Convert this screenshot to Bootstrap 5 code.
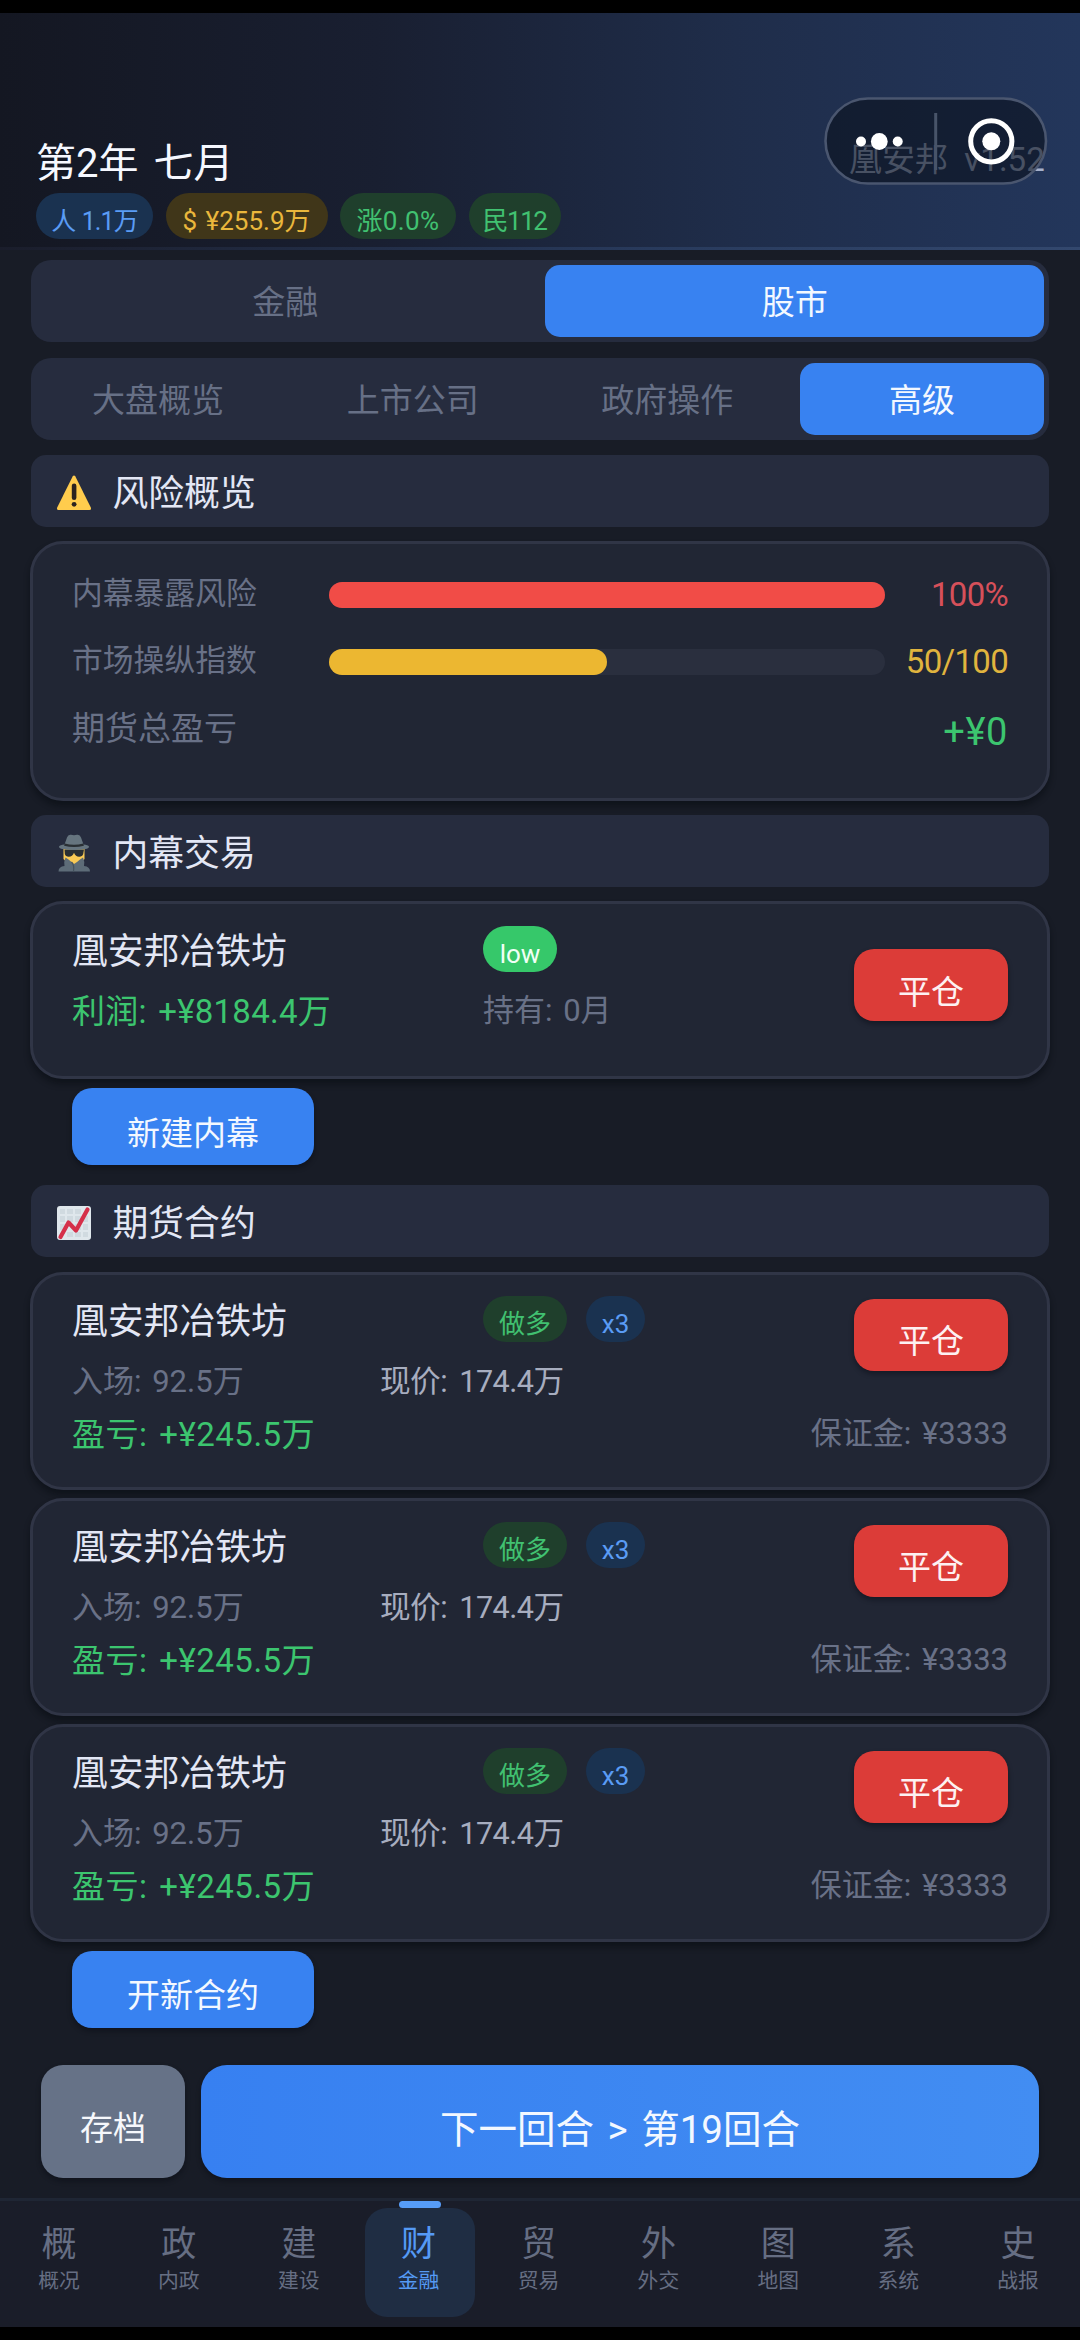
<!DOCTYPE html>
<html lang="zh-CN">
<head>
<meta charset="utf-8">
<meta name="viewport" content="width=device-width, initial-scale=1">
<title>凰安邦</title>
<link href="https://cdn.jsdelivr.net/npm/bootstrap@5.3.0/dist/css/bootstrap.min.css" rel="stylesheet">
<style>
  body { width: 1080px; height: 2340px; margin: 0; background: #000; color: #e3e7f5; overflow: hidden;
    font-family: Roboto, "Noto Sans CJK SC", sans-serif; line-height: 1; font-weight: 400; }
  .app { height: 2314px; margin-top: 13px; background: #181c26; }
  .topbar { height: 237px; padding: 130px 36px 0; position: relative; border-bottom: 3px solid #263550;
    border-image: linear-gradient(90deg, #1a1d2b, #283a5c 60%, #33486e) 1;
    background: linear-gradient(90deg, #141722, #191f31 35%, #1f2d4a 68%, #23365b); }
  .topbar .date { font-size: 40px; line-height: 41px; color: #f6f8ff; word-spacing: 5px; }
  .chips { margin-top: 9px; gap: 12.5px; }
  .chip { height: 46px; border-radius: 23px; font-size: 26px; padding-top: 10px; display: inline-flex; align-items: center; justify-content: center; flex: none; }
  .chip-blue { background: #1a3250; color: #5a9cf5; }
  .chip-gold { background: #403619; color: #eab73c; }
  .chip-green { background: #1f3f2c; color: #41c171; }
  .chip-low { background: #36c86a; color: #f0fff5; width: 74px; }
  .w-pop { width: 117px; font-size: 25px; letter-spacing: -.9px; word-spacing: 1px; }
  .w-cash { width: 162px; word-spacing: 2px; }
  .w-rise { width: 116px; letter-spacing: .4px; }
  .w-mood { width: 92px; letter-spacing: -1.5px; }
  .w-side { width: 84px; }
  .w-lev { width: 59px; margin-left: 19px; }
  .brand { font-size: 33px; color: #a5b1cc; top: 130px; left: 849px; white-space: pre; }
  .capsule { left: 824px; top: 84px; }
  .tabs { height: 82px; border-radius: 20px; background: #262c3e; padding: 5px; gap: 10.6px; margin: 10px 31px 0; }
  .tabs + .tabs { margin-top: 15.5px; }
  .tabs > div { flex: 1 1 0; display: flex; align-items: center; justify-content: center; border-radius: 15px; font-size: 33px; color: #677086; padding-top: 3px; }
  .tabs > .on { background: #3882f1; color: #f3f8ff; }
  .sect { height: 72px; margin: 14px 31px 0; border-radius: 15px; background: #262c3e; padding: 0 25px; font-size: 35.8px; gap: 20.5px; }
  .sect svg { margin-top: 4px; }
  .sect span { padding-top: 8px; }
  .panel { margin: 14px 30px 0; border: 3px solid #303546; border-radius: 33px; background: #212634; box-shadow: 0 5px 6px rgba(5,8,14,.45); padding: 0 39px; }
  .risk { height: 260px; padding-top: 17px; }
  .inside { height: 178px; padding-top: 22px; }
  .inside .b-red { margin-top: 23px; }
  .deal { height: 218px; padding-top: 21px; }
  .deal + .deal { margin-top: 8.2px; }
  .deal .b-red { margin-top: 3px; }
  .muted { color: #697187; }
  .soft { color: #a7adbf; }
  .gain { color: #3cc56f; }
  .meter { height: 26px; width: 556px; border-radius: 13px; background: #2a2f3e; }
  .meter > div { height: 26px; border-radius: 13px; }
  .mrow { height: 67px; }
  .mrow .val { font-size: 33px; letter-spacing: -.7px; }
  .mlabel { width: 257px; font-size: 30.8px; }
  .name { font-size: 35.8px; width: 411px; padding-top: 8px; }
  .b { display: flex; align-items: center; justify-content: center; border-radius: 20px; font-size: 33px; color: #fdf1f2; box-shadow: 0 3px 5px rgba(5,8,14,.4); }
  .b-red { width: 154px; height: 72px; background: #dc3c38; padding-top: 14px; }
  .b-blue { width: 242px; height: 77px; background: #3882f1; color: #f3f8ff; padding-top: 13px; margin: 9px 0 0 72px; }
  .t31 { font-size: 31px; line-height: 32px; word-spacing: 3px; }
  .t33 { font-size: 33px; line-height: 34px; word-spacing: 3px; letter-spacing: .25px; }
  .pl { letter-spacing: .5px; }
  .now { font-size: 30.6px; letter-spacing: -.5px; word-spacing: 5px; }
  .b-save { width: 144px; height: 113px; border-radius: 22px; background: #667287; color: #f6f8fc; padding-top: 13px; }
  .b-next { width: 838px; height: 113px; border-radius: 26px; background: linear-gradient(90deg, #3780f1, #428df2); color: #f3f8ff; font-size: 38.5px; padding-top: 18px; word-spacing: 4px; }
  .actions { margin: 0 41px 20px; gap: 16px; }
  .dock { height: 129px; background: #1a1d29; border-top: 3px solid #1f2634; padding-right: 1px; }
  .dock > div { flex: 1 1 0; display: flex; flex-direction: column; align-items: center; color: #666e83; padding-top: 26px; position: relative; left: -1px; }
  .dock .big { font-size: 35px; line-height: 36px; }
  .dock .sub { font-size: 20.8px; line-height: 22px; margin-top: 7px; }
  .dock .cur { color: #559af5; }
  .cur::before { content: ""; position: absolute; top: 7px; left: 6px; width: 110px; height: 109px; border-radius: 22px; background: #1f2d43; }
  .cur::after { content: ""; position: absolute; top: 0; left: 40px; width: 42px; height: 7px; border-radius: 3.5px; background: #569cf7; }
  .dock span { position: relative; z-index: 1; }
</style>
<script src="https://cdn.jsdelivr.net/npm/bootstrap@5.3.0/dist/js/bootstrap.bundle.min.js"></script>
</head>
<body>
<div class="app d-flex flex-column">
  <header class="topbar flex-shrink-0">
    <div class="date">第2年 七月</div>
    <div class="chips d-flex">
      <span class="chip chip-blue w-pop">人 1.1万</span>
      <span class="chip chip-gold w-cash">$ ¥255.9万</span>
      <span class="chip chip-green w-rise">涨0.0%</span>
      <span class="chip chip-green w-mood">民112</span>
    </div>
    <div class="brand position-absolute">凰安邦  v1.52</div>
    <svg class="capsule position-absolute" width="224" height="88" viewBox="0 0 224 88">
      <rect x="1.5" y="1.5" width="220.5" height="85" rx="42.5" fill="#0a101c" fill-opacity=".6" stroke="#4a566f" stroke-width="2.6"/>
      <path d="M111.700 16V73" stroke="#485469" stroke-width="3"/>
      <g fill="#fff"><circle cx="37" cy="44.500" r="5"/><circle cx="55.300" cy="44.500" r="8.400"/><circle cx="73.700" cy="44.500" r="5"/><circle cx="167.300" cy="44.300" r="9"/></g>
      <circle cx="167.300" cy="44.300" r="20.600" fill="none" stroke="#fff" stroke-width="5"/>
    </svg>
  </header>

  <nav class="tabs d-flex flex-shrink-0"><div>金融</div><div class="on">股市</div></nav>
  <nav class="tabs d-flex flex-shrink-0"><div>大盘概览</div><div>上市公司</div><div>政府操作</div><div class="on">高级</div></nav>

  <div class="sect d-flex align-items-center flex-shrink-0 mb-0" style="margin-top:15.5px">
    <svg width="36" height="36" viewBox="0 0 36 36"><path d="M16.6 1.600Q18 -.4 19.400 1.600L34.800 32.600Q35.600 35 33.400 35H2.600Q.4 35 1.200 32.600Z" fill="#ffcc4d"/><rect x="15.800" y="8.500" width="4.600" height="16.500" rx="2.300" fill="#2b2320"/><circle cx="18.100" cy="29.300" r="2.400" fill="#2b2320"/></svg>
    <span>风险概览</span>
  </div>
  <section class="panel risk flex-shrink-0">
    <div class="mrow d-flex align-items-center"><span class="mlabel muted">内幕暴露风险</span><div class="meter"><div style="width:100%;background:#f14c47"></div></div><span class="val ms-auto" style="color:#d6505a">100%</span></div>
    <div class="mrow d-flex align-items-center"><span class="mlabel muted">市场操纵指数</span><div class="meter"><div style="width:50%;background:#ecb731"></div></div><span class="val ms-auto" style="color:#e0b43e">50/100</span></div>
    <div class="mrow d-flex align-items-center justify-content-between"><span class="muted" style="font-size:33px">期货总盈亏</span><span class="gain" style="font-size:38px;letter-spacing:.6px;padding-top:6px">+¥0</span></div>
  </section>

  <div class="sect d-flex align-items-center flex-shrink-0">
    <svg width="36" height="38" viewBox="0 0 36 38">
      <path d="M7.500 14h21v11q-5 6-10.500 6t-10.500-6Z" fill="#f9ca55"/>
      <path d="M2.500 37.500q0-5 6-5.500-1-4 1-8.500 3 1.500 6 4.500l2.500 2 3-2q3-3 6-4.500 2 4.500 1 8.500 6 .5 6 5.500Z" fill="#5d6c78"/>
      <path d="M15.500 28q3 3 2 9.500" fill="none" stroke="#45525d" stroke-width="1.200"/>
      <path d="M8.500 15.500h19.500l-.8 4.500q-.8 2.800-4 2.800-3.700 0-5.200-4-1.500 4-5.200 4-3.200 0-4-2.800Z" fill="#292f33"/>
      <path d="M8.500 10.500 11 3.500Q12.200.2 15 .8q3 .8 6 0 2.800-.6 4 2.700l2.500 7q4.500.5 5.500 2 .3 1.500-2 2.200-13 2.800-26 0-2.300-.7-2-2.200 1-1.500 5.500-2Z" fill="#66757f"/>
      <path d="M8.700 9.500q9.300 2.500 18.600 0l.6 2.200q-9.900 2.600-19.800 0Z" fill="#292f33"/>
    </svg>
    <span>内幕交易</span>
  </div>
  <section class="panel inside d-flex justify-content-between flex-shrink-0">
    <div>
      <div class="d-flex align-items-center"><span class="name">凰安邦冶铁坊</span><span class="chip chip-low">low</span></div>
      <div class="d-flex" style="margin-top:23px"><span class="gain t33" style="width:411px">利润: +¥8184.4万</span><span class="muted t31">持有: 0月</span></div>
    </div>
    <div class="b b-red">平仓</div>
  </section>
  <div class="b b-blue flex-shrink-0">新建内幕</div>

  <div class="sect d-flex align-items-center flex-shrink-0" style="margin-top:20px">
    <svg width="36" height="36" viewBox="0 0 36 36"><rect x="1" y="1" width="34" height="34" rx="3" fill="#dfe7ec"/><path d="M4 4h5v5H4zM11 4h6v5h-6zM19 4h6v5h-6zM4 11h5v6H4zM11 11h6v6h-6zM19 11h6v6h-6zM27 11h5v6h-5zM4 19h5v6H4zM19 19h6v6h-6zM27 19h5v6h-5zM11 27h6v5h-6zM19 27h6v5h-6zM27 27h5v5h-5z" fill="#d0dae0"/><path d="M4.500 32 12.500 17.500 20 25.500 31.500 4.500" fill="none" stroke="#d5304a" stroke-width="4.200" stroke-linecap="round" stroke-linejoin="round"/></svg>
    <span>期货合约</span>
  </div>

  <section class="panel deal d-flex justify-content-between flex-shrink-0" style="margin-top:14.5px">
    <div>
      <div class="d-flex align-items-center"><span class="name">凰安邦冶铁坊</span><span class="chip chip-green w-side">做多</span><span class="chip chip-blue w-lev">x3</span></div>
      <div class="d-flex t31" style="margin-top:24px"><span class="muted" style="width:308px">入场: 92.5万</span><span class="soft now">现价: 174.4万</span></div>
      <div class="gain t33 pl" style="margin-top:20px">盈亏: +¥245.5万</div>
    </div>
    <div class="d-flex flex-column align-items-end"><div class="b b-red">平仓</div><div class="muted t31" style="margin-top:47px">保证金: ¥3333</div></div>
  </section>
  <section class="panel deal d-flex justify-content-between flex-shrink-0">
    <div>
      <div class="d-flex align-items-center"><span class="name">凰安邦冶铁坊</span><span class="chip chip-green w-side">做多</span><span class="chip chip-blue w-lev">x3</span></div>
      <div class="d-flex t31" style="margin-top:24px"><span class="muted" style="width:308px">入场: 92.5万</span><span class="soft now">现价: 174.4万</span></div>
      <div class="gain t33 pl" style="margin-top:20px">盈亏: +¥245.5万</div>
    </div>
    <div class="d-flex flex-column align-items-end"><div class="b b-red">平仓</div><div class="muted t31" style="margin-top:47px">保证金: ¥3333</div></div>
  </section>
  <section class="panel deal d-flex justify-content-between flex-shrink-0">
    <div>
      <div class="d-flex align-items-center"><span class="name">凰安邦冶铁坊</span><span class="chip chip-green w-side">做多</span><span class="chip chip-blue w-lev">x3</span></div>
      <div class="d-flex t31" style="margin-top:24px"><span class="muted" style="width:308px">入场: 92.5万</span><span class="soft now">现价: 174.4万</span></div>
      <div class="gain t33 pl" style="margin-top:20px">盈亏: +¥245.5万</div>
    </div>
    <div class="d-flex flex-column align-items-end"><div class="b b-red">平仓</div><div class="muted t31" style="margin-top:47px">保证金: ¥3333</div></div>
  </section>
  <div class="b b-blue flex-shrink-0">开新合约</div>

  <div class="actions d-flex mt-auto flex-shrink-0">
    <div class="b b-save">存档</div>
    <div class="b b-next">下一回合 &gt; 第19回合</div>
  </div>
  <nav class="dock d-flex flex-shrink-0">
    <div><span class="big">概</span><span class="sub">概况</span></div>
    <div><span class="big">政</span><span class="sub">内政</span></div>
    <div><span class="big">建</span><span class="sub">建设</span></div>
    <div class="cur"><span class="big">财</span><span class="sub">金融</span></div>
    <div><span class="big">贸</span><span class="sub">贸易</span></div>
    <div><span class="big">外</span><span class="sub">外交</span></div>
    <div><span class="big">图</span><span class="sub">地图</span></div>
    <div><span class="big">系</span><span class="sub">系统</span></div>
    <div><span class="big">史</span><span class="sub">战报</span></div>
  </nav>
</div>
</body>
</html>
